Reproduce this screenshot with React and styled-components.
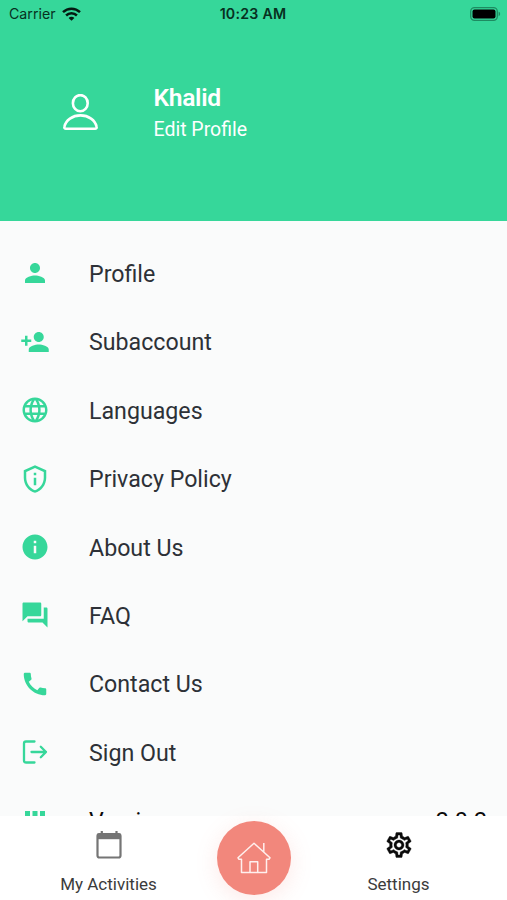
import React from 'react';
import styled, { createGlobalStyle, ThemeProvider } from 'styled-components';
import {
  MdApps,
  MdCall,
  MdInfo,
  MdLanguage,
  MdOutlinePrivacyTip,
  MdOutlineSettings,
  MdPerson,
  MdPersonAdd,
  MdQuestionAnswer,
} from 'react-icons/md';

const theme = {
  colors: {
    green: '#36d79a',
    coral: '#f2877c',
    background: '#fafbfb',
    white: '#ffffff',
    text: '#2d3137',
    black: '#0a0a0a',
    grey: '#757575',
  },
};

const GlobalStyle = createGlobalStyle`
  *, *::before, *::after {
    box-sizing: border-box;
  }

  body {
    margin: 0;
    font-family: Roboto, 'Liberation Sans', sans-serif;
  }

  svg {
    display: block;
    flex-shrink: 0;
  }
`;

const Screen = styled.div`
  width: 507px;
  height: 900px;
  display: flex;
  flex-direction: column;
  overflow: hidden;
  background: ${({ theme }) => theme.colors.background};
`;

const Header = styled.header`
  height: 220.5px;
  flex-shrink: 0;
  background: ${({ theme }) => theme.colors.green};
`;

const StatusBar = styled.div`
  height: 27px;
  display: grid;
  grid-template-columns: 1fr auto 1fr;
  align-items: center;
  padding: 0 6px 0 9px;
  font-family: Inter, sans-serif;
  font-size: 14.2px;
  color: #07301f;
`;

const Carrier = styled.div`
  display: flex;
  align-items: center;
  gap: 6px;
`;

const Time = styled.span`
  margin-right: 4px;
  font-weight: 600;
  font-size: 14.2px;
  letter-spacing: 0.25px;
`;

const BatterySlot = styled.div`
  justify-self: end;
`;

const User = styled.div`
  display: flex;
  align-items: center;
  padding: 53px 0 0 62px;
`;

const UserText = styled.div`
  margin-left: 54.5px;
  padding-top: 2px;
  color: ${({ theme }) => theme.colors.white};
`;

const UserName = styled.h1`
  margin: 0;
  font-size: 24.6px;
  line-height: 32px;
  font-weight: 600;
  letter-spacing: -0.3px;
`;

const EditProfile = styled.div`
  font-size: 19.5px;
  line-height: 31px;
`;

const Menu = styled.ul`
  flex: 1;
  min-height: 0;
  margin: 0;
  padding: 18.8px 20px 0;
  list-style: none;
  overflow: hidden;
`;

const MenuItem = styled.li`
  height: 68.4px;
  display: flex;
  align-items: center;
  color: ${({ theme }) => theme.colors.green};
`;

const MenuLabel = styled.span`
  margin-left: 39px;
  padding-top: 1px;
  font-size: 23.2px;
  color: ${({ theme, $dark }) => ($dark ? theme.colors.black : theme.colors.text)};
`;

const Version = styled.span`
  margin-left: auto;
  padding-top: 1px;
  font-size: 23.2px;
  color: ${({ theme }) => theme.colors.black};
`;

const TabBar = styled.nav`
  height: 84.5px;
  flex-shrink: 0;
  display: grid;
  grid-template-columns: 217px 73px 217px;
  background: ${({ theme }) => theme.colors.white};
`;

const Tab = styled.div`
  display: flex;
  flex-direction: column;
  align-items: center;
  padding-top: 14.5px;
  color: ${({ theme, $active }) => ($active ? theme.colors.black : theme.colors.grey)};
`;

const TabLabel = styled.span`
  margin-top: 13.5px;
  font-size: 17px;
  line-height: 20px;
  color: #3b3b3b;
`;

const SettingsIcon = styled(MdOutlineSettings)`
  path:not([fill='none']) {
    stroke: currentColor;
    stroke-width: 0.3px;
  }

  path[fill='none'] {
    stroke: none;
  }
`;

const HomeButton = styled.div`
  width: 74px;
  height: 74px;
  margin-top: 5px;
  display: flex;
  align-items: center;
  justify-content: center;
  border-radius: 50%;
  background: ${({ theme }) => theme.colors.coral};
  box-shadow: 0 5px 22px rgba(242, 135, 124, 0.18);
`;

const WifiIcon = () => (
  <svg width="19" height="14" viewBox="0 0 19 14" fill="none" stroke="#041a11" strokeWidth="2.5">
    <path d="M1 5.2C5.8.6 13.2.6 18 5.2" />
    <path d="M4.1 8.5c3-2.9 7.8-2.9 10.8 0" />
    <path d="M9.5 13.8 6.6 10.9c1.6-1.5 4.2-1.5 5.8 0Z" fill="#041a11" stroke="none" />
  </svg>
);

const BatteryIcon = () => (
  <svg width="31" height="14" viewBox="0 0 31 14" fill="none">
    <rect x="0.7" y="0.7" width="26.6" height="12.6" rx="3.8" stroke="#1e8b61" strokeWidth="1.3" />
    <rect x="2.5" y="2.5" width="23" height="9" rx="2" fill="#000" />
    <path d="M28.6 4.8c2 .6 2 3.8 0 4.4Z" fill="#1e8b61" />
  </svg>
);

const AvatarIcon = () => (
  <svg width="37" height="38" viewBox="0 0 37 38" fill="none" stroke="#fff" strokeWidth="2.6">
    <ellipse cx="18.3" cy="9.2" rx="7.4" ry="8.1" />
    <path
      d="M4 34.8h29c1.2 0 1.9-.9 1.6-2.1C33.2 26.2 26.6 21.4 18.5 21.4S3.8 26.2 2.4 32.7C2.1 33.9 2.8 34.8 4 34.8Z"
      strokeLinejoin="round"
    />
  </svg>
);

const SignOutIcon = () => (
  <svg
    width="30"
    height="30"
    viewBox="0 0 30 30"
    fill="none"
    stroke="currentColor"
    strokeWidth="2.3"
    strokeLinecap="round"
    strokeLinejoin="round"
  >
    <path d="M14.5 4.5H6a2 2 0 0 0-2 2v17a2 2 0 0 0 2 2h8.5" />
    <path d="M11.5 15H26M20.8 9.8 26 15l-5.2 5.2" />
  </svg>
);

const CalendarIcon = () => (
  <svg width="26" height="30" viewBox="0 0 26 30" fill="none" stroke="currentColor">
    <rect x="1.5" y="4" width="23" height="23.5" rx="2" strokeWidth="2.2" />
    <path d="M1.5 3.5h23v5.7h-23Z" fill="currentColor" stroke="none" />
    <path d="M5.8 1v4M20.5 1v4" strokeWidth="2.2" />
  </svg>
);

const HomeIcon = () => (
  <svg width="34" height="32" viewBox="0 0 34 32" fill="none" stroke="#fff0ee" strokeWidth="1.5" strokeLinejoin="round">
    <path d="M4.5 17.3H2L1 15.8 17 1.2l16 14.6-1 1.5h-2.5V30.5h-25Z" />
    <path d="M13 30.5V19.8h7.7v10.7" />
    <path d="M26.8 9.7V1" />
  </svg>
);

const menuItems = [
  { label: 'Profile', Icon: MdPerson },
  { label: 'Subaccount', Icon: MdPersonAdd },
  { label: 'Languages', Icon: MdLanguage },
  { label: 'Privacy Policy', Icon: MdOutlinePrivacyTip },
  { label: 'About Us', Icon: MdInfo },
  { label: 'FAQ', Icon: MdQuestionAnswer },
  { label: 'Contact Us', Icon: MdCall },
  { label: 'Sign Out', Icon: SignOutIcon },
  { label: 'Version', Icon: MdApps, value: '2.0.2' },
];

const App = () => (
  <ThemeProvider theme={theme}>
    <GlobalStyle />
    <Screen>
      <Header>
        <StatusBar>
          <Carrier>
            Carrier
            <WifiIcon />
          </Carrier>
          <Time>10:23 AM</Time>
          <BatterySlot>
            <BatteryIcon />
          </BatterySlot>
        </StatusBar>
        <User>
          <AvatarIcon />
          <UserText>
            <UserName>Khalid</UserName>
            <EditProfile>Edit Profile</EditProfile>
          </UserText>
        </User>
      </Header>
      <Menu>
        {menuItems.map(({ label, Icon, value }) => (
          <MenuItem key={label}>
            <Icon size={30} />
            <MenuLabel $dark={Boolean(value)}>{label}</MenuLabel>
            {value && <Version>{value}</Version>}
          </MenuItem>
        ))}
      </Menu>
      <TabBar>
        <Tab>
          <CalendarIcon />
          <TabLabel>My Activities</TabLabel>
        </Tab>
        <HomeButton>
          <HomeIcon />
        </HomeButton>
        <Tab $active>
          <SettingsIcon size={30} />
          <TabLabel>Settings</TabLabel>
        </Tab>
      </TabBar>
    </Screen>
  </ThemeProvider>
);

export default App;
